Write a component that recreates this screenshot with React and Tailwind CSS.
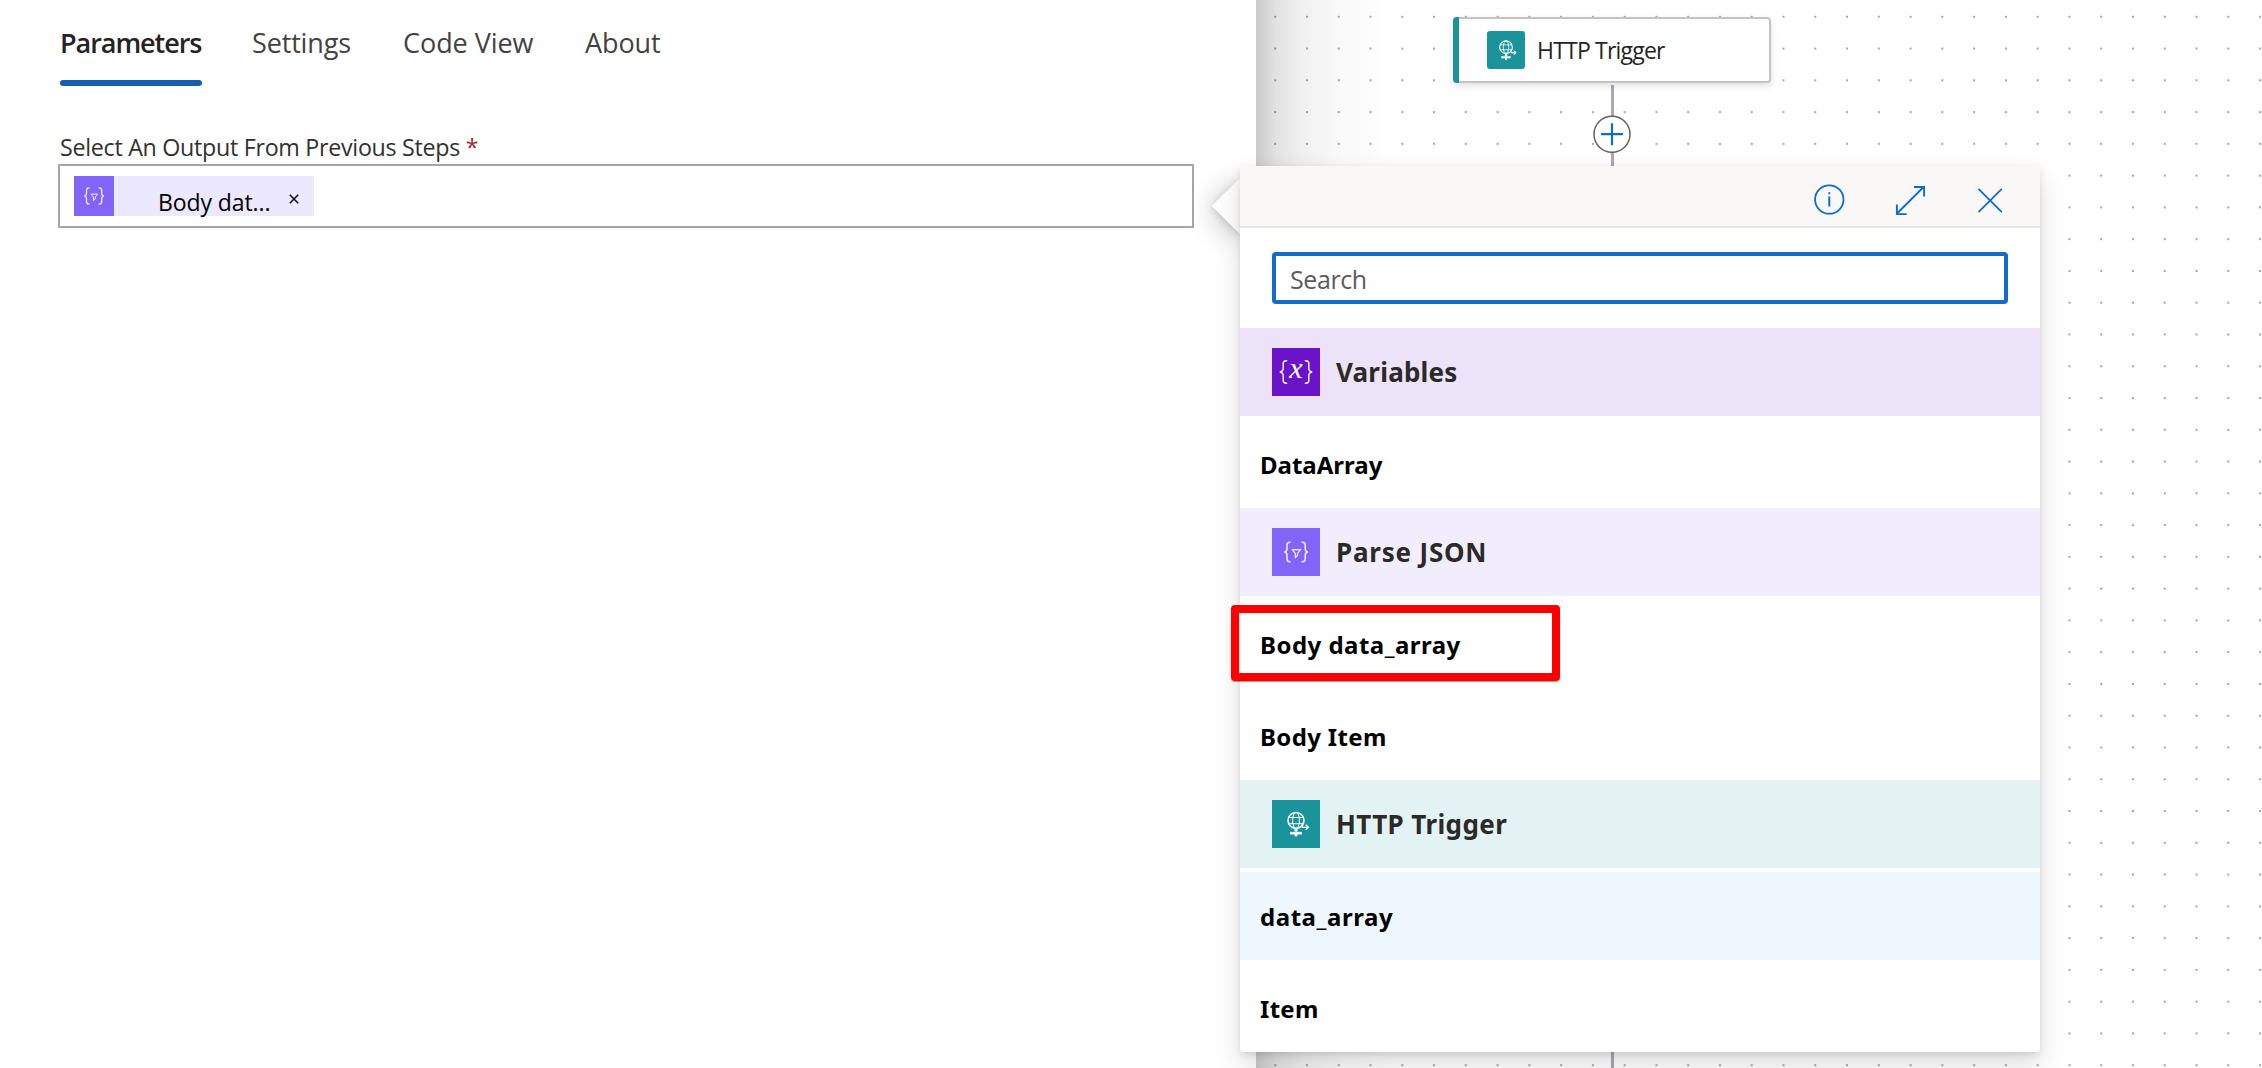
function ParseJsonIcon({ className }) {
  return (
    <svg viewBox="0 0 48 48" className={className} fill="none" stroke="#f3efff" strokeWidth="1.5">
      <path d="M18.6 14.3h-.8c-2 0-2.8 1-2.8 2.8v3.6c0 1.9-.7 2.9-2.6 3.3 1.9.4 2.6 1.4 2.6 3.3v3.6c0 1.8.8 2.8 2.8 2.8h.8" />
      <path d="M29.6 14.3h.8c2 0 2.8 1 2.8 2.8v3.6c0 1.9.7 2.9 2.6 3.3-1.9.4-2.6 1.4-2.6 3.3v3.6c0 1.8-.8 2.8-2.8 2.8h-.8" />
      <path d="M20.4 21.7h8l-2.9 3.7v2.1l-2.2 1.9v-4z" strokeWidth="1.2" />
    </svg>
  );
}

function VariablesIcon({ className }) {
  return (
    <svg viewBox="0 0 48 48" className={className} fill="none" stroke="#ffffff" strokeWidth="1.4">
      <path d="M15.2 12.7h-1c-2.1 0-3 1-3 3v4.6c0 2.2-1 3.3-3.4 3.7 2.4.4 3.4 1.5 3.4 3.7v4.6c0 2 .9 3 3 3h1" />
      <path d="M32.8 12.7h1c2.1 0 3 1 3 3v4.6c0 2.2 1 3.3 3.4 3.7-2.4.4-3.4 1.5-3.4 3.7v4.6c0 2-.9 3-3 3h-1" />
      <text
        x="24"
        y="30"
        textAnchor="middle"
        fill="#ffffff"
        stroke="none"
        fontStyle="italic"
        fontWeight="400"
        fontSize="30"
        fontFamily="'Liberation Serif', serif"
      >
        x
      </text>
    </svg>
  );
}

function HttpIcon({ className }) {
  return (
    <svg viewBox="0 0 48 48" className={className} fill="none" stroke="#ffffff">
      <circle cx="24" cy="20.4" r="8" strokeWidth="1.5" />
      <ellipse cx="24" cy="20.4" rx="3.4" ry="8" strokeWidth="1" />
      <path d="M16.8 17.5h14.4M16.8 23.7h14.4" strokeWidth="1" />
      <path d="M30.4 24.2v3.1h5.6M33.8 24.7l2.6 2.6-2.6 2.6" strokeWidth="1.3" />
      <path d="M24 28.6v3" strokeWidth="3" />
      <path d="M18 33.2h12" strokeWidth="2.6" />
      <path d="M24 33v3.4" strokeWidth="2.6" />
    </svg>
  );
}

const TABS = [
  { label: "Parameters", style: "font-semibold text-[#242424] tracking-[-1.05px] w-[142px]", active: true },
  { label: "Settings", style: "text-[#424242] tracking-[-0.15px] w-[101px]" },
  { label: "Code View", style: "text-[#424242] tracking-[-0.05px] w-[132px]" },
  { label: "About", style: "text-[#424242] tracking-[-0.1px]" },
];

const GROUPS = [
  {
    title: "Variables",
    titleStyle: "tracking-[0.2px]",
    Icon: VariablesIcon,
    band: "bg-[#ece3f8]",
    tile: "bg-[#6b13c8]",
    items: [{ label: "DataArray", style: "" }],
  },
  {
    title: "Parse JSON",
    titleStyle: "tracking-[0.8px]",
    Icon: ParseJsonIcon,
    band: "bg-[#f2edfd]",
    tile: "bg-[#8264f8]",
    items: [
      { label: "Body data_array", style: "tracking-[0.47px]", marked: true },
      { label: "Body Item", style: "tracking-[0.35px]" },
    ],
  },
  {
    title: "HTTP Trigger",
    titleStyle: "tracking-[0.4px]",
    Icon: HttpIcon,
    band: "bg-[#e3f2f3]",
    tile: "bg-[#1b939b]",
    items: [
      { label: "data_array", style: "bg-[#eef6fe] tracking-[0.55px]" },
      { label: "Item", style: "tracking-[0.3px]" },
    ],
  },
];

function Sidebar() {
  return (
    <section className="w-[1256px] shrink-0 bg-white pl-[58px]">
      <nav className="flex h-[86px] gap-[50px] pl-[2px] text-[27px] leading-[86px]">
        {TABS.map((tab) => (
          <div key={tab.label} className={`relative whitespace-nowrap ${tab.style}`}>
            {tab.label}
            {tab.active && <span className="absolute inset-x-0 bottom-0 h-[6px] rounded-full bg-[#155eb0]" />}
          </div>
        ))}
      </nav>
      <label className="mt-[44px] block h-[34px] pl-[2px] text-[23.25px] leading-[35px] tracking-[-0.29px] text-[#323130]">
        Select An Output From Previous Steps <span className="text-[#a4262c]">*</span>
      </label>
      <div className="flex h-[64px] w-[1136px] border-2 border-[#a6a6a6] pt-[10px] pl-[14px]">
        <div className="flex h-10 w-[240px] bg-[#ece8fd]">
          <div className="size-10 bg-[#8264f8]">
            <ParseJsonIcon className="size-10" />
          </div>
          <span className="ml-[44px] h-10 pt-[6px] text-[23px] leading-10 tracking-[-0.1px] text-black">Body dat...</span>
          <svg viewBox="0 0 10 10" className="mt-[18px] ml-[19px] size-[10px]" stroke="#111" strokeWidth="1.6">
            <path d="M0.8 0.8l8.4 8.4M9.2 0.8l-8.4 8.4" />
          </svg>
        </div>
      </div>
    </section>
  );
}

function Canvas() {
  return (
    <section className="relative flex-1 overflow-hidden bg-white">
      <svg className="absolute inset-0 size-full">
        <defs>
          <pattern id="dots" x="3.3" y="0.9" width="31.77" height="31.77" patternUnits="userSpaceOnUse">
            <circle cx="15.9" cy="15.9" r="1.1" fill="#91919a" />
          </pattern>
        </defs>
        <rect width="100%" height="100%" fill="url(#dots)" />
      </svg>
      <div className="absolute inset-y-0 left-0 w-[140px] bg-[linear-gradient(to_right,rgba(0,0,0,0.21),rgba(0,0,0,0.115)_20px,rgba(0,0,0,0.06)_46px,rgba(0,0,0,0.025)_80px,rgba(0,0,0,0.01)_110px,transparent)]" />
      <div className="absolute top-[85px] bottom-0 left-[354.5px] w-[3px] bg-[#a9a9b0]" />
      <div className="absolute top-[17px] left-[197px] flex h-[66px] w-[318px] items-center rounded-[4px] border-2 border-[#c4c4c4] bg-white shadow-[0_3px_7px_rgba(0,0,0,0.13)]">
        <div className="-my-[2px] -ml-[2px] h-[66px] w-[6px] rounded-l-[4px] bg-[#1b939b]" />
        <div className="ml-[28px] size-[38px] rounded-[3px] bg-[#1b939b]">
          <HttpIcon className="size-[38px]" />
        </div>
        <span className="ml-[12px] text-[23px] leading-[30px] tracking-[-0.8px] whitespace-nowrap text-[#242424]">
          HTTP Trigger
        </span>
      </div>
      <svg viewBox="0 0 38 38" className="absolute top-[115px] left-[337px] size-[38px]">
        <circle cx="19" cy="19.2" r="18" fill="#ffffff" stroke="#616161" strokeWidth="1.5" />
        <path d="M19 8.2v22M8 19.2h22" stroke="#0f6cce" strokeWidth="2.2" />
      </svg>
    </section>
  );
}

function TokenPicker() {
  return (
    <aside className="absolute top-[166px] left-[1240px] h-[886px] w-[800px]">
      <div className="absolute top-[20px] -left-[20px] size-10 rotate-45 bg-white shadow-[0_2px_7px_rgba(0,0,0,0.11),0_6px_28px_rgba(0,0,0,0.2)]" />
      <div className="absolute inset-0 rounded-[4px] shadow-[0_2.4px_7.2px_rgba(0,0,0,0.108),0_12.8px_28.8px_rgba(0,0,0,0.132)]" />
      <div className="relative h-full rounded-[4px] bg-white">
        <header className="flex h-[62px] items-center justify-end gap-[48px] rounded-t-[4px] border-b-2 border-[#e8e7e5] bg-[#f9f8f6] pt-[7px] pr-[34px]">
          <svg viewBox="0 0 32 32" className="size-8" fill="none" stroke="#0f6cce" strokeWidth="1.8">
            <circle cx="15.3" cy="15.5" r="14.2" />
            <path d="M15.3 12.4v10.1M15.3 8.3v2" strokeWidth="2" />
          </svg>
          <svg viewBox="0 0 32 32" className="size-8" fill="none" stroke="#0f6cce" strokeWidth="1.9">
            <path d="M3 29.5L29.5 3M20 3h10.1v9.5M2.9 20.5v9.6h9.8" />
          </svg>
          <svg viewBox="0 0 32 32" className="size-8" fill="none" stroke="#0f6cce" strokeWidth="1.8">
            <path d="M4.5 4.8l23.3 23.3M27.8 4.8l-23.3 23.3" />
          </svg>
        </header>
        <div className="px-8 py-6">
          <input
            className="block h-[52px] w-full rounded-[4px] border-4 border-[#136ccb] bg-white px-[14px] pt-[1px] text-[25px] tracking-[-0.4px] outline-none placeholder:text-[#5c5c5c]"
            placeholder="Search"
          />
        </div>
        {GROUPS.map(({ title, titleStyle, Icon, band, tile, items }) => (
          <div key={title} className="font-['Noto_Sans','Open_Sans',sans-serif] font-bold">
            <div className={`flex h-[88px] items-center gap-4 pl-8 ${band}`}>
              <div className={`size-12 ${tile}`}>
                <Icon className="size-12" />
              </div>
              <h3 className={`text-[26px] leading-[36px] text-[#2b2a29] ${titleStyle}`}>{title}</h3>
            </div>
            {items.map((item) => (
              <div
                key={item.label}
                className={`relative mt-1 flex h-[88px] items-center pt-[2px] pl-5 text-2xl text-black ${item.style}`}
              >
                {item.label}
                {item.marked && (
                  <span className="absolute top-[5px] -left-[9px] h-[76px] w-[329px] rounded-[4px] border-8 border-[#ff0000] shadow-[0_1px_1px_rgba(0,0,0,0.4)]" />
                )}
              </div>
            ))}
          </div>
        ))}
      </div>
    </aside>
  );
}

export default function App() {
  return (
    <main className="relative flex h-[1068px] w-[2262px] overflow-hidden bg-white font-['Open_Sans','Noto_Sans',sans-serif]">
      <Sidebar />
      <Canvas />
      <TokenPicker />
    </main>
  );
}
